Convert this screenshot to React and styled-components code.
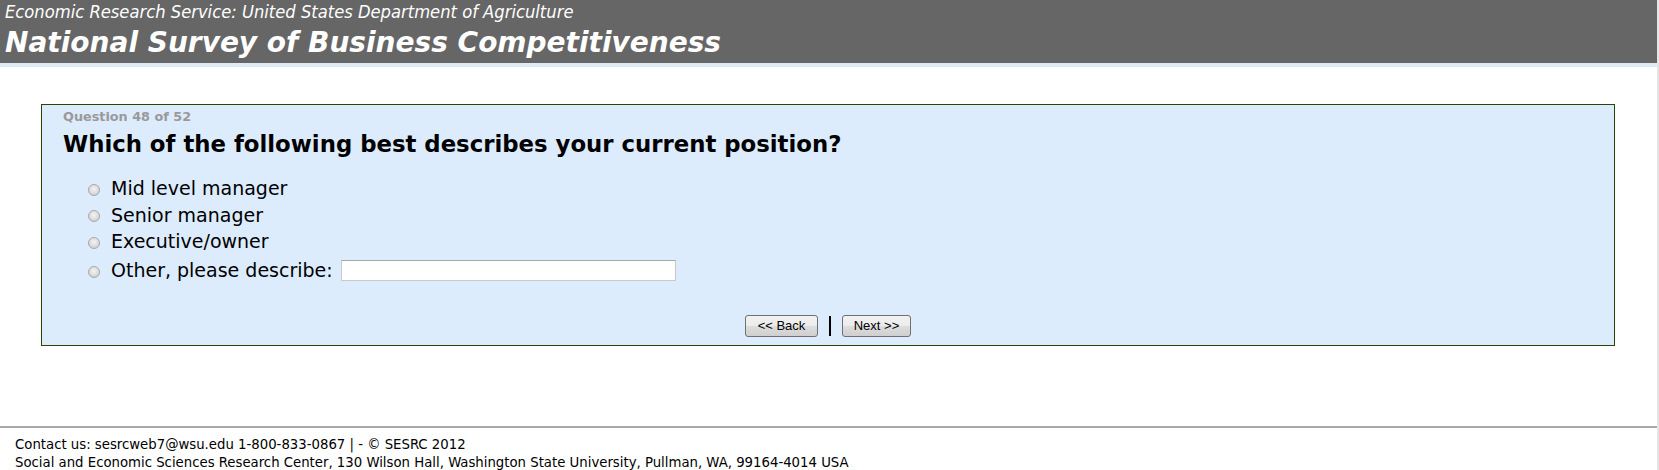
import React from "react";
import styled, { createGlobalStyle } from "styled-components";

const Global = createGlobalStyle`
  html, body { margin: 0; padding: 0; background: #fff; }
  body { font-family: "DejaVu Sans", Verdana, sans-serif; }
  *, *::before, *::after { box-sizing: border-box; }
`;

const Page = styled.div`
  min-height: 470px;
  border-right: 2px solid #e4e4e4;
  display: flex;
  flex-direction: column;
`;

const Header = styled.header`
  background: #666666;
  height: 67px;
  padding-left: 5px;
  color: #fff;
  display: flex;
  flex-direction: column;
  border-bottom: 4px solid #dfeaf7;
`;

const Agency = styled.div`
  font-family: "DejaVu Sans Condensed", "DejaVu Sans", sans-serif;
  font-style: italic;
  font-size: 18.2px;
  line-height: 22px;
  margin-top: 1px;
`;

const Title = styled.h1`
  margin: 0;
  font-family: "DejaVu Sans", Verdana, sans-serif;
  font-style: italic;
  font-weight: bold;
  font-size: 28px;
  line-height: 39px;
`;

const Main = styled.main`
  padding: 37px 42px 0 41px;
`;

const Panel = styled.section`
  background: #ddecfd;
  border: 1px solid #2b4500;
  height: 242px;
  padding: 4px 21px 0 21px;
  display: flex;
  flex-direction: column;
`;

const Counter = styled.div`
  color: #999999;
  font-weight: bold;
  font-size: 12.8px;
  line-height: 16px;
`;

const Question = styled.h2`
  margin: 4px 0 0;
  font-size: 22.8px;
  font-weight: bold;
  color: #000;
  line-height: 30px;
`;

const Options = styled.div`
  margin-top: 16px;
  padding-left: 25px;
  display: flex;
  flex-direction: column;
`;

const Option = styled.label`
  display: flex;
  align-items: center;
  height: ${(p) => (p.$tall ? "31px" : "26.5px")};
  font-size: 19px;
  color: #000;
`;

const Radio = styled.input.attrs({ type: "radio" })`
  appearance: none;
  width: 12px;
  height: 12px;
  margin: 3px 11px 0 0;
  border-radius: 50%;
  border: 1px solid #a8a8a8;
  background: radial-gradient(circle at 50% 40%, #f4f4f4 0%, #dcdcdc 55%, #c4c4c4 100%);
`;

const TextBox = styled.input.attrs({ type: "text" })`
  width: 335px;
  height: 21px;
  margin-left: 8px;
  border: 1px solid #c9c9c9;
  border-top-color: #a8a8a8;
  background: #fff;
  padding: 1px 2px;
`;

const Nav = styled.div`
  margin-top: 29px;
  display: flex;
  justify-content: center;
  align-items: center;
  gap: 11px;
`;

const Button = styled.button`
  height: 22px;
  width: ${(p) => p.$w}px;
  padding: 0;
  font-family: "Liberation Sans", Arial, sans-serif;
  font-size: 13px;
  color: #000;
  border: 1px solid #707070;
  border-radius: 3px;
  background: linear-gradient(#f2f2f2 0%, #ebebeb 50%, #dddddd 51%, #cfcfcf 100%);
`;

const Divider = styled.span`
  width: 2px;
  height: 20px;
  background: #000;
`;

const Footer = styled.footer`
  margin-top: 80px;
  border-top: 2px solid #a8a8a8;
  padding: 7px 15px 0;
  font-family: "DejaVu Sans Condensed", "DejaVu Sans", sans-serif;
  font-size: 14.75px;
  line-height: 18px;
  color: #000;
`;

export default function App() {
  return (
    <>
      <Global />
      <Page>
        <Header>
          <Agency>Economic Research Service: United States Department of Agriculture</Agency>
          <Title>National Survey of Business Competitiveness</Title>
        </Header>
        <Main>
          <Panel>
            <Counter>Question 48 of 52</Counter>
            <Question>Which of the following best describes your current position?</Question>
            <Options>
              <Option><Radio name="q" />Mid level manager</Option>
              <Option><Radio name="q" />Senior manager</Option>
              <Option><Radio name="q" />Executive/owner</Option>
              <Option $tall><Radio name="q" />Other, please describe:<TextBox /></Option>
            </Options>
            <Nav>
              <Button $w={73}>&lt;&lt; Back</Button>
              <Divider />
              <Button $w={69}>Next &gt;&gt;</Button>
            </Nav>
          </Panel>
        </Main>
        <Footer>
          <div>Contact us: sesrcweb7@wsu.edu 1-800-833-0867 | - © SESRC 2012</div>
          <div>Social and Economic Sciences Research Center, 130 Wilson Hall, Washington State University, Pullman, WA, 99164-4014 USA</div>
        </Footer>
      </Page>
    </>
  );
}
